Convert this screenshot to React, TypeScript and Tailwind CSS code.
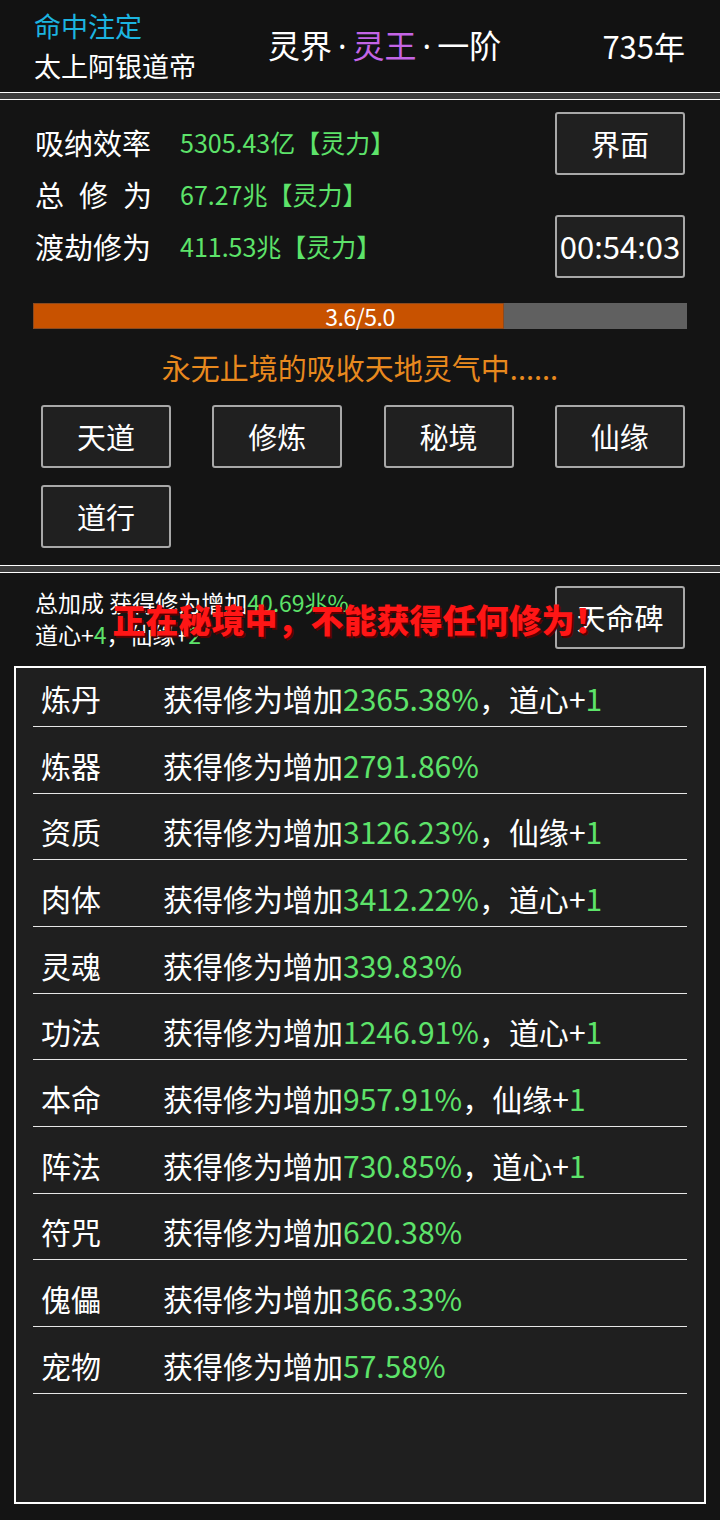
import React from "react";

const green = "text-[#5de36a]";

interface BonusRow {
  name: string;
  pct: string;
  extra?: { label: string; value: string };
}

const rows: BonusRow[] = [
  { name: "炼丹", pct: "2365.38%", extra: { label: "道心", value: "1" } },
  { name: "炼器", pct: "2791.86%" },
  { name: "资质", pct: "3126.23%", extra: { label: "仙缘", value: "1" } },
  { name: "肉体", pct: "3412.22%", extra: { label: "道心", value: "1" } },
  { name: "灵魂", pct: "339.83%" },
  { name: "功法", pct: "1246.91%", extra: { label: "道心", value: "1" } },
  { name: "本命", pct: "957.91%", extra: { label: "仙缘", value: "1" } },
  { name: "阵法", pct: "730.85%", extra: { label: "道心", value: "1" } },
  { name: "符咒", pct: "620.38%" },
  { name: "傀儡", pct: "366.33%" },
  { name: "宠物", pct: "57.58%" },
];

const menu = ["天道", "修炼", "秘境", "仙缘", "道行"];

function Btn({ children, className = "" }: { children: React.ReactNode; className?: string }) {
  return (
    <button
      className={`h-[63px] w-[130px] rounded-[3px] border-2 border-[#a8a8a8] bg-[#202020] text-[29px] text-white flex items-center justify-center ${className}`}
    >
      {children}
    </button>
  );
}

function Divider() {
  return <div className="h-[8px] border-y border-white bg-[#3c3c3c]" />;
}

function Dot() {
  return <span className="font-['Noto_Sans',sans-serif] mx-[6px]">·</span>;
}

export default function App() {
  const progress = 3.6 / 5.0;

  return (
    <div className="w-[720px] h-[1520px] bg-[#141414] text-white font-['Noto_Sans_CJK_SC','Noto_Sans',sans-serif] overflow-hidden">
      {/* Header */}
      <div className="h-[92px] bg-[#121212] flex items-center pl-[34px] pr-[35px]">
        <div className="w-[234px] flex flex-col">
          <span className="text-[27px] leading-[40px] text-[#1cb4e0]">命中注定</span>
          <span className="text-[27px] leading-[40px]">太上阿银道帝</span>
        </div>
        <div className="text-[32px] leading-none mb-[2px]">
          灵界<Dot />
          <span className="text-[#c465e6]">灵王</span>
          <Dot />一阶
        </div>
        <div className="ml-auto text-[31px] leading-none mb-[2px]">735年</div>
      </div>

      <Divider />

      {/* Cultivation panel */}
      <div className="h-[465px] pt-[12px]">
        <div className="flex pl-[35px] pr-[35px]">
          <div className="mt-[5px] flex flex-col">
            <div className="h-[52px] flex items-center">
              <span className="w-[145px] text-[29px]">吸纳效率</span>
              <span className={`text-[25px] ${green}`}>5305.43亿【灵力】</span>
            </div>
            <div className="h-[52px] flex items-center">
              <span className="w-[145px]">
                <span className="w-[117px] flex justify-between text-[29px]">
                  <span>总</span>
                  <span>修</span>
                  <span>为</span>
                </span>
              </span>
              <span className={`text-[25px] ${green}`}>67.27兆【灵力】</span>
            </div>
            <div className="h-[52px] flex items-center">
              <span className="w-[145px] text-[29px]">渡劫修为</span>
              <span className={`text-[25px] ${green}`}>411.53兆【灵力】</span>
            </div>
          </div>
          <div className="ml-auto flex flex-col gap-[40px]">
            <Btn>界面</Btn>
            <Btn className="text-[31px]">00:54:03</Btn>
          </div>
        </div>

        <div className="mt-[25px] mx-[33px] h-[26px] bg-[#606060] relative">
          <div className="h-full bg-[#c85200] border border-[#8a4a20]" style={{ width: `${progress * 100}%` }} />
          <div className="absolute inset-0 flex items-center justify-center text-[23px] leading-none tracking-[-0.5px]">
            3.6/5.0
          </div>
        </div>

        <div className="mt-[19px] h-[40px] flex items-center justify-center text-[29px] text-[#e8891e]">
          永无止境的吸收天地灵气中......
        </div>

        <div className="mt-[17px] pl-[41px] pr-[35px] grid grid-cols-4 gap-x-[41px] gap-y-[17px]">
          {menu.map((m) => (
            <Btn key={m}>{m}</Btn>
          ))}
        </div>
      </div>

      <Divider />

      {/* Bonus panel */}
      <div className="relative pt-[13px]">
        <div className="flex pl-[35px] pr-[35px]">
          <div className="flex flex-col text-[23px] leading-[32px]">
            <span>
              总加成 获得修为增加<span className={green}>40.69兆%</span>
            </span>
            <span>
              道心+<span className={green}>4</span>，仙缘+<span className={green}>2</span>
            </span>
          </div>
          <Btn className="ml-auto">天命碑</Btn>
        </div>

        <div className="absolute left-0 right-0 top-[26px] flex justify-center text-[33px] font-black leading-[40px] text-[#ff1616] [text-shadow:2px_2px_0_#5a0000]">
          正在秘境中，不能获得任何修为！
        </div>

        <div className="mt-[16px] mx-[14px] h-[838px] border-2 border-white bg-[#1f1f1f]">
          {rows.map((r, i) => (
            <div
              key={r.name}
              className={`${i === 0 ? "h-[59px]" : "h-[66.67px]"} mx-[17px] flex items-end pb-[13px] border-b border-[#e6e6e6] text-[30px] leading-[30px]`}
            >
              <span className="w-[130px] pl-[8px]">{r.name}</span>
              <span>
                获得修为增加<span className={green}>{r.pct}</span>
                {r.extra && (
                  <>
                    ，{r.extra.label}+<span className={green}>{r.extra.value}</span>
                  </>
                )}
              </span>
            </div>
          ))}
        </div>
      </div>
    </div>
  );
}
